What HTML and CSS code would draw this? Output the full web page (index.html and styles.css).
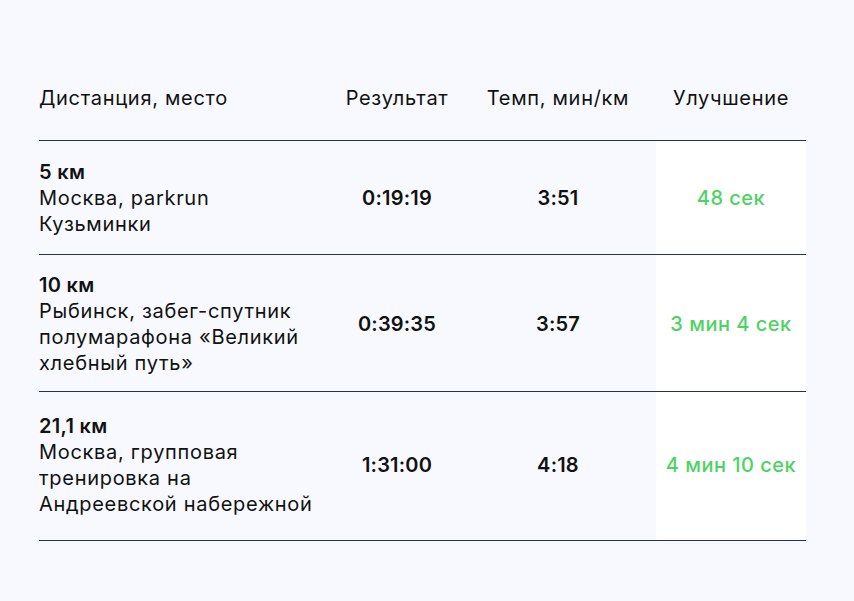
FILE: index.html
```html
<!DOCTYPE html>
<html lang="ru">
<head>
<meta charset="utf-8">
<link rel="stylesheet" href="styles.css">
</head>
<body>
<div class="page">
  <div class="table">
    <div class="row head">
      <div class="cell first">Дистанция, место</div>
      <div class="cell">Результат</div>
      <div class="cell">Темп, мин/км</div>
      <div class="cell">Улучшение</div>
    </div>
    <div class="row r1">
      <div class="cell first"><b>5 км</b><br>Москва, parkrun<br>Кузьминки</div>
      <div class="cell val">0:19:19</div>
      <div class="cell val">3:51</div>
      <div class="cell good">48 сек</div>
    </div>
    <div class="row r2">
      <div class="cell first"><b>10 км</b><br>Рыбинск, забег-спутник полумарафона «Великий хлебный путь»</div>
      <div class="cell val">0:39:35</div>
      <div class="cell val">3:57</div>
      <div class="cell good">3 мин 4 сек</div>
    </div>
    <div class="row r3">
      <div class="cell first"><b>21,1 км</b><br>Москва, групповая тренировка на Андреевской набережной</div>
      <div class="cell val">1:31:00</div>
      <div class="cell val">4:18</div>
      <div class="cell good">4 мин 10 сек</div>
    </div>
  </div>
</div>
</body>
</html>
```
FILE: styles.css
```css
html, body {
  margin: 0;
  padding: 0;
  background: #f8f9fe;
}
body {
  font-family: Inter, "Noto Sans", sans-serif;
  font-size: 20px;
  line-height: 26px;
  color: #111111;
  letter-spacing: 0.7px;
}
.page {
  padding: 85px 48px 0 39px;
}
.table {
  width: 767px;
}
.row {
  display: grid;
  grid-template-columns: 295px 126px 196px 150px;
  border-bottom: 1px solid #26344a;
}
.cell {
  display: flex;
  align-items: center;
  justify-content: center;
  text-align: center;
}
.cell.first {
  display: block;
  text-align: left;
}
.head .cell {
  padding-bottom: 29px;
}
.row b {
  font-weight: 600;
  letter-spacing: 0.3px;
}
.val {
  font-weight: 600;
  letter-spacing: 0.2px;
}
.good {
  color: #4cd463;
  font-weight: 500;
  letter-spacing: 0.5px;
  background: #ffffff;
}
.r1 .cell { padding: 18px 0 17px; }
.r2 .cell { padding: 17px 0 15px; }
.r3 .cell { padding: 21px 0 23px; }
.r1 .cell.first, .r2 .cell.first, .r3 .cell.first { padding-right: 6px; }
```
